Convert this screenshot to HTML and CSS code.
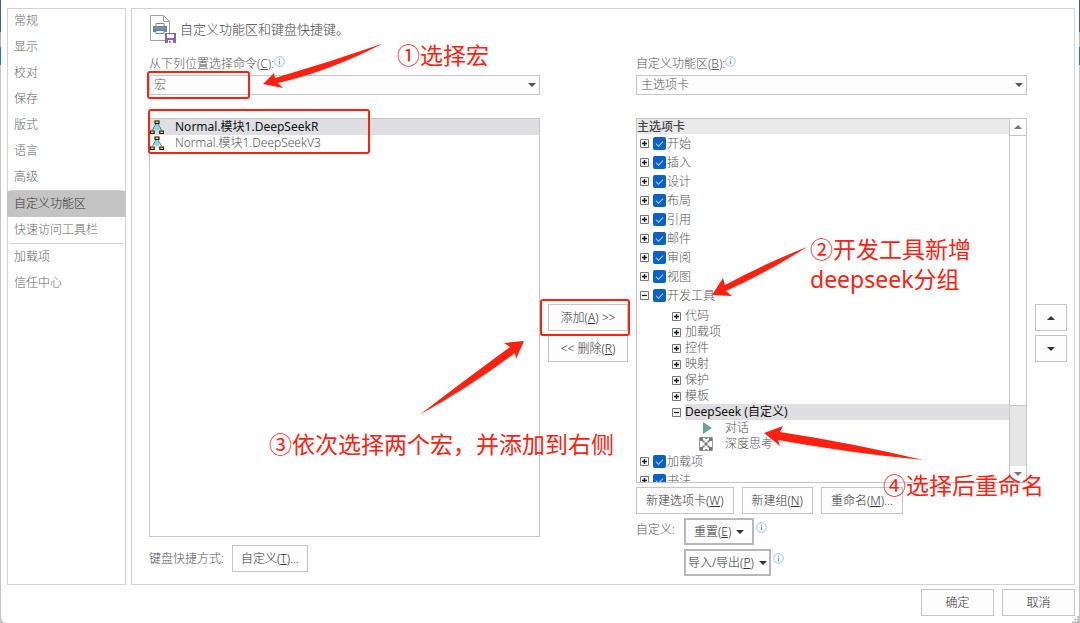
FILE: index.html
```html
<!DOCTYPE html>
<html lang="zh-CN">
<head>
<meta charset="utf-8">
<title>自定义功能区和键盘快捷键</title>
<link rel="stylesheet" href="styles.css">
</head>
<body>
<svg class="defs" aria-hidden="true">
  <symbol id="macro" viewBox="0 0 14 15">
    <path d="M6 4L2.500 10M8 4l3.500 6" stroke="#444" stroke-width=".8" fill="none"/>
    <path d="M7 4.500l3 3-3 3-3-3z" fill="#7fe3ee" stroke="#50a0a8" stroke-width=".5"/>
    <path d="M5 1h4v2.500H5zM.6 11h3.600v2.500H.6zM9.800 11h3.600v2.500H9.800z" fill="#f5e63c" stroke="#111" stroke-width="1.100"/>
  </symbol>
  <symbol id="info" viewBox="0 0 11 11">
    <circle cx="5.500" cy="5.500" r="4.800" fill="#fff" stroke="#9dbbe6"/>
    <path d="M5.500 2.500v1.200M5.500 4.700v3.600" stroke="#6f9ad8" stroke-width="1.200"/>
  </symbol>
  <symbol id="plus" viewBox="0 0 9 9">
    <path d="M.5.5h8v8h-8z" fill="#fff" stroke="#777"/><path d="M2 4.500h5M4.500 2v5" stroke="#111" stroke-width="1.400"/>
  </symbol>
  <symbol id="minus" viewBox="0 0 9 9">
    <path d="M.5.5h8v8h-8z" fill="#fff" stroke="#777"/><path d="M2 4.500h5" stroke="#111" stroke-width="1.200"/>
  </symbol>
  <symbol id="down" viewBox="0 0 8 4"><path d="M0 0h8L4 4z" fill="currentColor"/></symbol>
  <symbol id="up" viewBox="0 0 8 4"><path d="M0 4h8L4 0z" fill="currentColor"/></symbol>
</svg>

<div class="dialog">
  <div class="body">
    <nav class="sidebar">
      <ul>
        <li><a href="#">常规</a></li>
        <li><a href="#">显示</a></li>
        <li><a href="#">校对</a></li>
        <li><a href="#">保存</a></li>
        <li><a href="#">版式</a></li>
        <li><a href="#">语言</a></li>
        <li><a href="#">高级</a></li>
      </ul>
      <hr>
      <ul>
        <li><a href="#" class="current" aria-current="page">自定义功能区</a></li>
        <li><a href="#">快速访问工具栏</a></li>
      </ul>
      <hr>
      <ul>
        <li><a href="#">加载项</a></li>
        <li><a href="#">信任中心</a></li>
      </ul>
    </nav>

    <main class="panel">
      <header class="heading">
        <svg class="page-icon" viewBox="0 0 27 30" aria-hidden="true">
          <path d="M1.500 1.500h13l6 6v19h-19z" fill="#fff" stroke="#a0a0a0"/>
          <path d="M14.500 1.500v6h6" fill="none" stroke="#a0a0a0"/>
          <path d="M7 9.500h8v3H7z" fill="#fff" stroke="#888"/>
          <path d="M4 12h14v6H4z" fill="#7b828b"/>
          <path d="M5 14h12" stroke="#5e9bdc" stroke-width="1.500"/>
          <path d="M7 16.500h8v3H7z" fill="#fff" stroke="#5b8fc8"/>
          <path d="M16 19h11v10H16z" fill="#8d62b5"/>
          <path d="M18 20h7v4h-7zM19 26h5v3h-5z" fill="#fff"/>
          <path d="M20 27h1.500v2H20z" fill="#8d62b5"/>
        </svg>
        <h1>自定义功能区和键盘快捷键。</h1>
      </header>

      <div class="columns">
        <section class="column source">
          <div class="field-label"><label for="from">从下列位置选择命令(<u>C</u>):</label><svg class="info"><use href="#info"/></svg></div>
          <div class="dropdown">
            <select id="from"><option>宏</option></select>
            <svg class="caret"><use href="#down"/></svg>
          </div>
          <ul class="macros" role="listbox" aria-label="宏">
            <li role="option" aria-selected="true"><svg><use href="#macro"/></svg>Normal.模块1.DeepSeekR</li>
            <li role="option" aria-selected="false"><svg><use href="#macro"/></svg>Normal.模块1.DeepSeekV3</li>
          </ul>
          <div class="shortcut"><span id="keys">键盘快捷方式:</span><button type="button" class="btn" aria-describedby="keys">自定义(<u>T</u>)...</button></div>
        </section>

        <div class="stack">
          <button type="button" class="btn">添加(<u>A</u>) &gt;&gt;</button>
          <button type="button" class="btn">&lt;&lt; 删除(<u>R</u>)</button>
        </div>

        <section class="column">
          <div class="field-label"><label for="ribbon">自定义功能区(<u>B</u>):</label><svg class="info"><use href="#info"/></svg></div>
          <div class="dropdown">
            <select id="ribbon"><option>主选项卡</option></select>
            <svg class="caret"><use href="#down"/></svg>
          </div>
          <div class="tree">
            <div class="tree-view">
              <h2>主选项卡</h2>
              <ul class="tabs">
                <li><label><svg><use href="#plus"/></svg><input type="checkbox" checked>开始</label></li>
                <li><label><svg><use href="#plus"/></svg><input type="checkbox" checked>插入</label></li>
                <li><label><svg><use href="#plus"/></svg><input type="checkbox" checked>设计</label></li>
                <li><label><svg><use href="#plus"/></svg><input type="checkbox" checked>布局</label></li>
                <li><label><svg><use href="#plus"/></svg><input type="checkbox" checked>引用</label></li>
                <li><label><svg><use href="#plus"/></svg><input type="checkbox" checked>邮件</label></li>
                <li><label><svg><use href="#plus"/></svg><input type="checkbox" checked>审阅</label></li>
                <li><label><svg><use href="#plus"/></svg><input type="checkbox" checked>视图</label></li>
                <li><label><svg><use href="#minus"/></svg><input type="checkbox" checked>开发工具</label>
                  <ul class="groups">
                    <li><svg><use href="#plus"/></svg><span>代码</span></li>
                    <li><svg><use href="#plus"/></svg><span>加载项</span></li>
                    <li><svg><use href="#plus"/></svg><span>控件</span></li>
                    <li><svg><use href="#plus"/></svg><span>映射</span></li>
                    <li><svg><use href="#plus"/></svg><span>保护</span></li>
                    <li><svg><use href="#plus"/></svg><span>模板</span></li>
                    <li><svg><use href="#minus"/></svg><span class="selected">DeepSeek (自定义)</span></li>
                  </ul>
                  <ul class="commands">
                    <li><svg viewBox="0 0 14 14"><path d="M4 1l9 6-9 6z" fill="#6fa392"/></svg>对话</li>
                    <li><svg viewBox="0 0 14 14"><path d="M.5.5h13v13H.5z" fill="#fff" stroke="#999"/><path d="M1 1h3v3H1zM10 1h3v3h-3zM1 10h3v3H1zM10 10h3v3h-3zM5.500 5.500h3v3h-3zM3.500 3.500h2v2h-2zM8.500 3.500h2v2h-2zM3.500 8.500h2v2h-2zM8.500 8.500h2v2h-2zM6 1h2v1H6zM6 12h2v1H6z" fill="#777"/></svg>深度思考</li>
                  </ul>
                </li>
                <li><label><svg><use href="#plus"/></svg><input type="checkbox" checked>加载项</label></li>
                <li><label><svg><use href="#plus"/></svg><input type="checkbox" checked>书法</label></li>
              </ul>
            </div>
            <div class="scrollbar">
              <button type="button" aria-label="向上滚动"><svg><use href="#up"/></svg></button>
              <div class="thumb"></div>
              <div class="track"></div>
              <button type="button" aria-label="向下滚动"><svg><use href="#down"/></svg></button>
            </div>
          </div>
          <div class="actions">
            <button type="button" class="btn">新建选项卡(<u>W</u>)</button>
            <button type="button" class="btn">新建组(<u>N</u>)</button>
            <button type="button" class="btn">重命名(<u>M</u>)...</button>
          </div>
          <div class="customize">
            <span>自定义:</span>
            <div><button type="button" class="btn strong"><span>重置(<u>E</u>)</span><svg><use href="#down"/></svg></button><svg class="info"><use href="#info"/></svg></div>
            <div class="second"><button type="button" class="btn strong tight"><span>导入/导出(<u>P</u>)</span><svg><use href="#down"/></svg></button><svg class="info"><use href="#info"/></svg></div>
          </div>
        </section>

        <div class="stack">
          <button type="button" class="btn" aria-label="上移"><svg><use href="#up"/></svg></button>
          <button type="button" class="btn" aria-label="下移"><svg><use href="#down"/></svg></button>
        </div>
      </div>
    </main>
  </div>

  <footer class="footer">
    <button type="button" class="btn">确定</button>
    <button type="button" class="btn">取消</button>
  </footer>
  <svg class="grip" viewBox="0 0 8 8" aria-hidden="true"><path d="M6 0h2v2H6zM3 3h2v2H3zM6 3h2v2H6zM0 6h2v2H0zM3 6h2v2H3zM6 6h2v2H6z" fill="#b5b5b5"/></svg>

  <div class="notes">
    <svg class="arrows" viewBox="0 0 1080 623" aria-hidden="true">
      <path d="M263 84L274 73L275 78Q330 62 383 43.500Q330 71 278 83L283 88z"/>
      <path d="M712 295L723 278L725 285Q766 263 807 247Q768 272 726 291L732 296z"/>
      <path d="M524 341L504 343L510 347Q462 382 420 414.500Q468 388 515 353L516 359z"/>
      <path d="M764 433L783 426L780 432Q852 443 923 460Q850 453 778 440L780 446z"/>
    </svg>
    <div class="frame frame-source"></div>
    <div class="frame frame-macros"></div>
    <div class="frame frame-add"></div>
    <p class="note note-1">①选择宏</p>
    <p class="note note-2">②开发工具新增<br>deepseek分组</p>
    <p class="note note-3">③依次选择两个宏，并添加到右侧</p>
    <p class="note note-4">④选择后重命名</p>
  </div>
</div>
</body>
</html>
```
FILE: styles.css
```css
* { box-sizing: border-box; }

body {
  margin: 0;
  background: linear-gradient(#46618f 0 32px, #b4b8be 32px 47px, #1c7cc4 47px 65px, #c4c4c4 65px);
  font: 300 12px/16px "Noto Sans", "Noto Sans CJK SC", sans-serif;
  color: #555;
}

ul, h1, h2, p { margin: 0; padding: 0; list-style: none; }
svg { display: block; flex: none; }
button, select { font: inherit; color: inherit; }
.defs { position: absolute; width: 0; height: 0; }

.dialog {
  position: relative;
  display: flex;
  flex-direction: column;
  min-height: 100vh;
  margin: 0 1px;
  padding: 8px 4px 7px 6px;
  background: #fff;
  border-radius: 0 0 6px 6px;
}

.body { flex: 1; display: flex; gap: 5px; }

.sidebar {
  flex: none;
  width: 119px;
  box-shadow: inset 0 0 0 1px #d2d2d2;
}
.sidebar a {
  display: block;
  padding: 5px 7px;
  color: #666;
  text-decoration: none;
}
.sidebar .current { background: #c4c4c4; color: #333; }
.sidebar hr { height: 1px; margin: 0 3px; border: 0; background: #d2d2d2; }

.panel {
  flex: 1;
  display: flex;
  flex-direction: column;
  padding: 6px 8px 9px 18px;
  box-shadow: inset 0 0 0 1px #d2d2d2;
}

.heading { display: flex; align-items: center; gap: 4px; margin-bottom: 12px; }
.heading h1 { font-size: 13px; font-weight: 300; line-height: 20px; color: #444; }
.page-icon { width: 27px; height: 30px; }

.columns {
  flex: 1;
  display: grid;
  grid-template-columns: 1fr 80px 1fr 32px;
  gap: 8px;
}
.column { display: flex; flex-direction: column; min-width: 0; }
.source { padding-bottom: 4px; }

.field-label { display: flex; margin-bottom: 3px; }
.info { width: 11px; height: 11px; }

.dropdown { position: relative; }
.dropdown select {
  display: block;
  width: 100%;
  height: 20px;
  padding: 0 4px;
  border: 1px solid #c6c6c6;
  border-radius: 0;
  background: #fdfdfd;
  appearance: none;
}
.caret { position: absolute; right: 4px; top: 8px; width: 8px; height: 4px; pointer-events: none; }

.macros { flex: 1; margin: 23px 0 8px; border: 1px solid #c6c6c6; }
.macros li { display: flex; align-items: center; gap: 11px; height: 16px; }
.macros svg { width: 14px; height: 15px; }
.macros [aria-selected="true"] { background: #dedee3; color: #111; font-weight: 400; }

.btn {
  height: 27px;
  padding: 0 8px;
  border: 1px solid #c6c6c6;
  background: #fdfdfd;
  color: #333;
  white-space: nowrap;
}
.btn svg { width: 8px; height: 4px; }
.shortcut { display: flex; align-items: center; gap: 8px; }

.stack {
  display: flex;
  flex-direction: column;
  justify-content: center;
  gap: 4px;
  padding-top: 34px;
}
.stack .btn { display: flex; align-items: center; justify-content: center; white-space: pre; }

.tree {
  flex: 1 1 0;
  display: flex;
  min-height: 300px;
  margin: 23px 0 4px;
  border: 1px solid #c6c6c6;
  overflow: hidden;
}
.tree-view { flex: 1; height: 0; }
.tree h2 { height: 15px; background: #e9e9e9; font-size: 12px; font-weight: 500; line-height: 15px; color: #444; }
.tabs label { display: flex; align-items: center; height: 19px; padding-left: 3px; }
.tabs label svg, .groups svg { width: 9px; height: 9px; margin-right: 4px; }
.tabs input {
  width: 13px;
  height: 13px;
  margin: 0 1px 0 0;
  border-radius: 2px;
  background: #0a63c2;
  appearance: none;
}
.tabs input:checked::before {
  content: "";
  display: block;
  width: 6px;
  height: 3px;
  margin: 4px 3px;
  border: solid #a9cbf0;
  border-width: 0 0 1px 1px;
  transform: rotate(-45deg);
}
.groups { padding: 3px 0 0 35px; }
.groups li, .commands li { display: flex; align-items: center; height: 16px; }
.groups span { flex: 1; }
.groups .selected { background: #dedee3; color: #111; font-weight: 400; }
.commands { padding-left: 62px; }
.commands svg { width: 14px; height: 14px; margin-right: 12px; }

.scrollbar {
  display: flex;
  flex-direction: column;
  width: 17px;
  border-left: 1px solid #c6c6c6;
}
.scrollbar button {
  display: flex;
  align-items: center;
  justify-content: center;
  height: 16px;
  padding: 0;
  border: 0;
  background: #fff;
  color: #777;
}
.scrollbar button svg { width: 8px; height: 4px; }
.thumb { flex: 9; border: solid #c6c6c6; border-width: 1px 0; }
.track { flex: 2; background: #e6e6e6; }

.actions { display: flex; gap: 8px; margin-bottom: 4px; }
.actions .btn { padding: 0 9px; }
.customize { display: grid; grid-template-columns: auto 1fr; gap: 4px 9px; }
.customize > span { padding-top: 4px; }
.customize div { display: flex; gap: 2px; }
.customize .second { grid-column: 2; }
.customize .info { margin-top: 4px; }
.btn.strong { display: flex; align-items: center; gap: 5px; border: 2px solid #b8b8b8; }
.btn.tight { padding: 0 2px; }

.footer { display: flex; justify-content: flex-end; gap: 8px; margin-top: 4px; }
.footer .btn { width: 73px; }
.grip { position: absolute; right: 0; bottom: 0; width: 7px; height: 7px; }

/* Annotations drawn over the dialog */
.notes { position: absolute; top: 0; left: -1px; color: #ff2010; pointer-events: none; }
.arrows { width: 1080px; height: 623px; fill: #ff2010; }
.frame { position: absolute; border: 2px solid #ff2010; border-radius: 3px; }
.frame-source { left: 147px; top: 71px; width: 103px; height: 28px; }
.frame-macros { left: 148px; top: 109px; width: 222px; height: 45px; }
.frame-add { left: 540px; top: 299px; width: 90px; height: 37px; }
.note { position: absolute; font-size: 23px; font-weight: 400; line-height: 30px; white-space: nowrap; }
.note-1 { left: 397px; top: 40px; }
.note-2 { left: 810px; top: 234px; }
.note-3 { left: 269px; top: 429px; }
.note-4 { left: 883px; top: 470px; }
```
